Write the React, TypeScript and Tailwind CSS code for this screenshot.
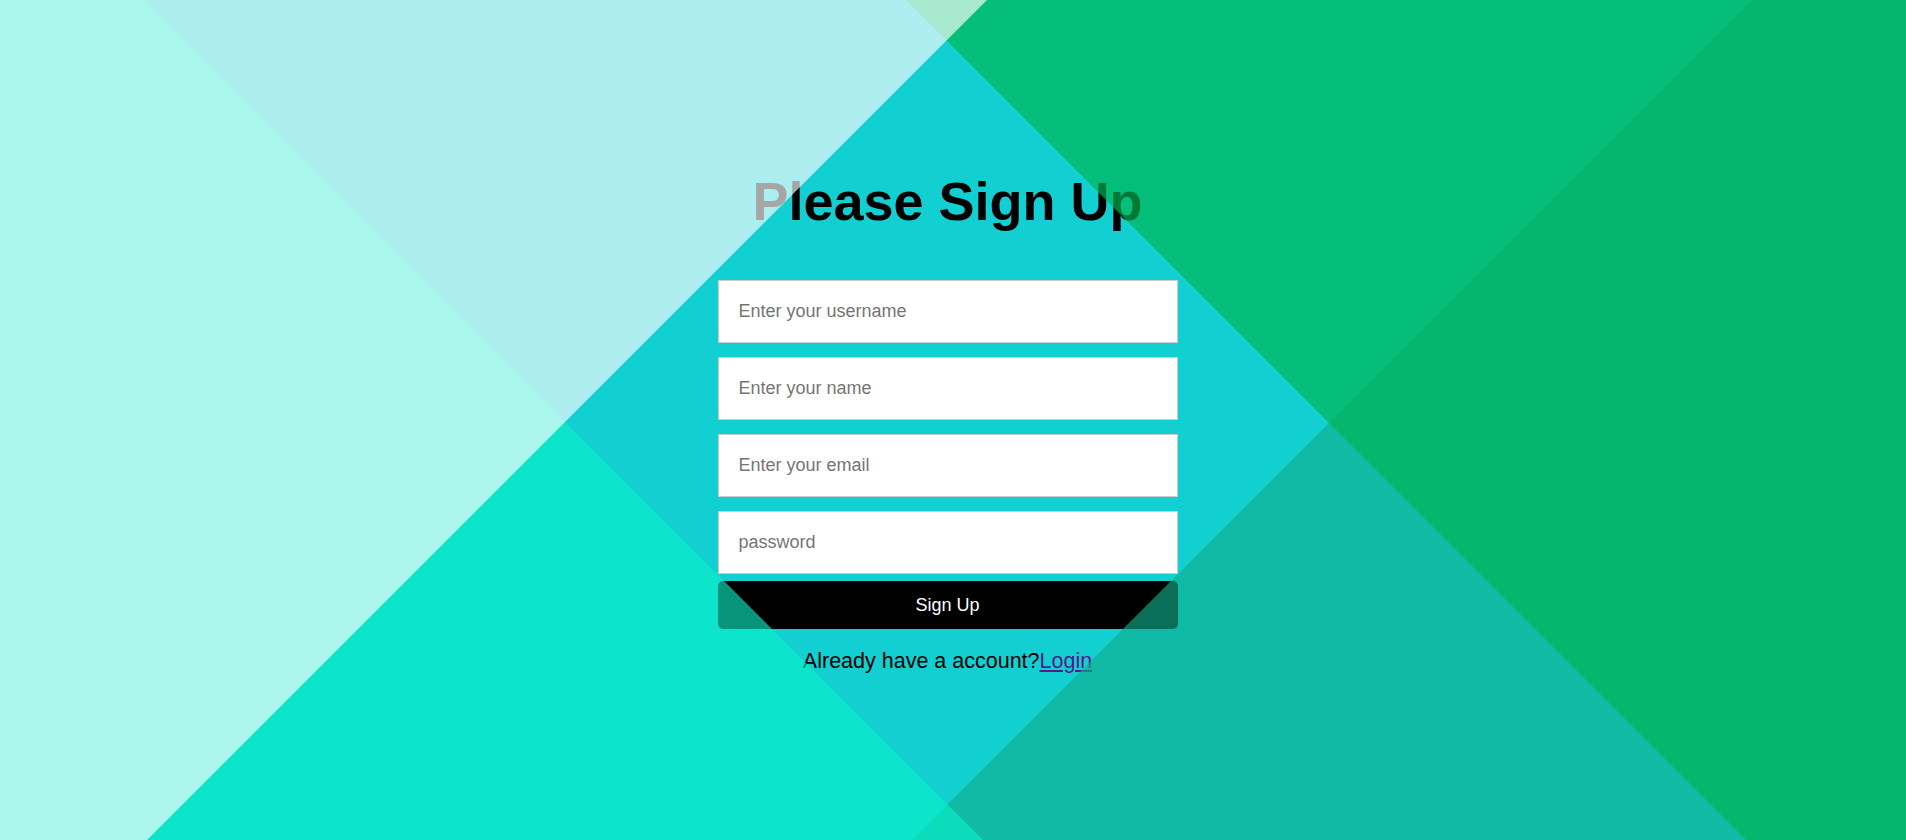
import React from "react";

export default function App() {
  return (
    <div
      className="relative min-h-screen w-full overflow-hidden bg-[#12cfd1] text-black"
      style={{ fontFamily: '"Liberation Sans", Arial, sans-serif' }}
    >
      <div className="flex flex-col items-center pt-[170px] pr-[11px]">
        <h1 className="m-0 text-[54px] font-bold leading-[normal] text-black">Please Sign Up</h1>

        <form className="mt-[48px] flex w-[460px] flex-col" onSubmit={(e) => e.preventDefault()}>
          <div className="flex flex-col gap-[14px]">
            <input
              type="text"
              placeholder="Enter your username"
              className="h-[63px] w-full border border-[#cccccc] bg-white px-5 text-[18px] text-black outline-none placeholder:text-[#757575]"
            />
            <input
              type="text"
              placeholder="Enter your name"
              className="h-[63px] w-full border border-[#cccccc] bg-white px-5 text-[18px] text-black outline-none placeholder:text-[#757575]"
            />
            <input
              type="email"
              placeholder="Enter your email"
              className="h-[63px] w-full border border-[#cccccc] bg-white px-5 text-[18px] text-black outline-none placeholder:text-[#757575]"
            />
            <input
              type="password"
              placeholder="password"
              className="h-[63px] w-full border border-[#cccccc] bg-white px-5 text-[18px] text-black outline-none placeholder:text-[#757575]"
            />
          </div>
          <button
            type="submit"
            className="mt-[7px] h-[48px] w-full rounded-[5px] bg-black text-[18px] leading-[normal] text-white"
          >
            Sign Up
          </button>
        </form>

        <p className="mt-[20px] text-[21.5px] leading-[normal] text-black">
          Already have a account?
          <a href="#" className="text-[#551a8b] underline">
            Login
          </a>
        </p>
      </div>

      <svg
        className="pointer-events-none fixed inset-0 z-10 h-full w-full"
        viewBox="0 0 1906 840"
        preserveAspectRatio="none"
      >
        <polygon points="1752,0 1906,0 1906,840 912,840" fill="#10af8c" fillOpacity="0.63" />
        <polygon points="0,0 143,0 983,840 0,840" fill="#0bf0c8" fillOpacity="0.62" />
        <polygon points="906,0 1906,0 1906,840 1746,840" fill="#00b64f" fillOpacity="0.67" />
        <polygon points="0,0 987,0 147,840 0,840" fill="#ffffff" fillOpacity="0.65" />
      </svg>
    </div>
  );
}
